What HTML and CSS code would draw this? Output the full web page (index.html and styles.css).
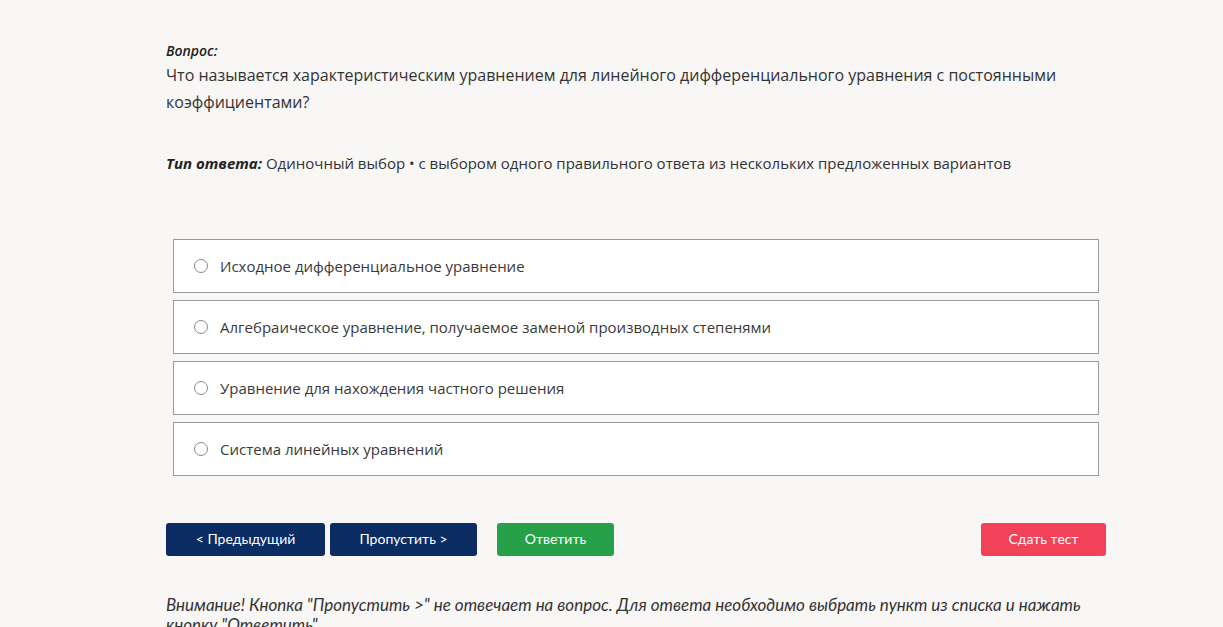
FILE: index.html
```html
<!DOCTYPE html>
<html lang="ru">
<head>
    <meta charset="UTF-8">
    <title>Тест</title>
    <link rel="stylesheet" href="styles.css">
</head>
<body>
    <div class="quiz">
        <div class="question">
            <div class="question-label">Вопрос:</div>
            <div class="question-text">Что называется характеристическим уравнением для линейного дифференциального уравнения с постоянными коэффициентами?</div>
        </div>

        <div class="answer-type"><span class="answer-type-label">Тип ответа:</span> Одиночный выбор • с выбором одного правильного ответа из нескольких предложенных вариантов</div>

        <div class="options">
            <label class="option"><span class="radio"></span>Исходное дифференциальное уравнение</label>
            <label class="option"><span class="radio"></span>Алгебраическое уравнение, получаемое заменой производных степенями</label>
            <label class="option"><span class="radio"></span>Уравнение для нахождения частного решения</label>
            <label class="option"><span class="radio"></span>Система линейных уравнений</label>
        </div>

        <div class="actions">
            <button type="button" class="btn btn-nav btn-prev">&lt; Предыдущий</button>
            <button type="button" class="btn btn-nav btn-skip">Пропустить &gt;</button>
            <button type="button" class="btn btn-answer">Ответить</button>
            <button type="button" class="btn btn-finish">Сдать тест</button>
        </div>

        <p class="notice">Внимание! Кнопка "Пропустить &gt;" не отвечает на вопрос. Для ответа необходимо выбрать пункт из списка и нажать кнопку "Ответить".</p>
    </div>
</body>
</html>
```

FILE: styles.css
```css
* {
    box-sizing: border-box;
}

body {
    margin: 0;
    background-color: #f8f7f6;
    color: #333;
    font-family: 'Open Sans', 'Noto Sans', sans-serif;
}

.quiz {
    width: 940px;
    margin-left: 166px;
    padding-top: 40px;
}

.question-label {
    font-size: 14px;
    font-weight: 600;
    font-style: italic;
    line-height: 22px;
    color: #222;
}

.question-text {
    font-size: 16px;
    line-height: 27px;
    padding-right: 30px;
}

.answer-type {
    margin-top: 36px;
    font-size: 15px;
    line-height: 22px;
}

.answer-type-label {
    font-weight: bold;
    font-style: italic;
    color: #222;
}

.options {
    display: flex;
    flex-direction: column;
    gap: 7px;
    margin: 65px 7px 0 7px;
}

.option {
    display: flex;
    align-items: center;
    height: 54px;
    padding-left: 20px;
    background-color: #fff;
    border: 1px solid #9a9a9a;
    font-size: 15px;
    color: #3a3a3a;
}

.radio {
    width: 14px;
    height: 14px;
    margin-right: 12px;
    border: 1.5px solid #8a8a8a;
    border-radius: 50%;
}

.actions {
    display: flex;
    margin-top: 47px;
}

.btn {
    height: 33px;
    padding-bottom: 3px;
    border: none;
    border-radius: 3px;
    color: #fff;
    font-family: 'Lato', sans-serif;
    font-size: 14px;
    cursor: pointer;
}

.btn-nav {
    background-color: #0b2d63;
}

.btn-prev {
    width: 159px;
}

.btn-skip {
    width: 147px;
    margin-left: 5px;
}

.btn-answer {
    width: 117px;
    margin-left: 20px;
    background-color: #26a14a;
}

.btn-finish {
    width: 125px;
    margin-left: auto;
    background-color: #f2425a;
}

.notice {
    margin: 39px 0 0 0;
    font-family: 'Lato', sans-serif;
    font-style: italic;
    font-size: 17px;
    line-height: 20px;
    color: #333;
}
```
